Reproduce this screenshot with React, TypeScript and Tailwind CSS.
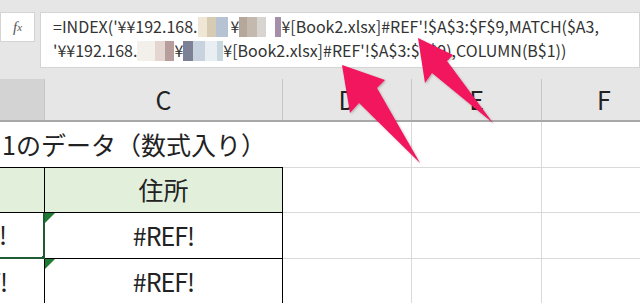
import React from 'react';

const font = { fontFamily: '"Noto Sans CJK JP", "Noto Sans", sans-serif' };

// pixelated mosaic block used for the blurred parts of the path
const Mosaic = ({ cells }: { cells: { w: number; c: string }[] }) => (
  <span className="inline-flex h-[20px] align-[-4px]">
    {cells.map((cell, i) => (
      <span key={i} className="inline-block h-full" style={{ width: cell.w, background: cell.c }} />
    ))}
  </span>
);

const Arrows = () => (
  <svg className="absolute left-0 top-0 pointer-events-none" width="640" height="303" viewBox="0 0 640 303">
    <defs>
      <filter id="sh" x="-20%" y="-20%" width="140%" height="140%">
        <feDropShadow dx="1" dy="1" stdDeviation="1" floodColor="#000" floodOpacity="0.25" />
      </filter>
    </defs>
    <polygon
      filter="url(#sh)"
      fill="#f2145e"
      points="342,65 385,80 377,88 420,163 359,103 350,113"
    />
    <polygon
      filter="url(#sh)"
      fill="#f2145e"
      points="418,38 453,55 447,61 493,123 432,73 425,83"
    />
  </svg>
);

const FormulaBar = () => (
  <div className="flex h-[79px] bg-[#e6e6e6] pt-[12px]">
    <div className="flex h-[30px] w-[35px] items-center justify-center border border-[#d4d4d4] bg-white text-[15px] italic text-[#555]" style={{ fontFamily: '"Liberation Serif", serif' }}>
      f<span className="text-[11px]">x</span>
    </div>
    <div
      className="ml-[5px] h-[56px] flex-1 border border-[#d4d4d4] bg-white pl-[12px] pt-[1px] text-[16px] leading-[24px] text-[#333] whitespace-nowrap overflow-hidden"
      style={font}
    >
      <div>
        =INDEX('¥¥192.168.
        <Mosaic cells={[{ w: 9, c: '#efe6d6' }, { w: 9, c: '#d8cbb4' }, { w: 12, c: '#b6c3d3' }, { w: 3, c: '#fff' }]} />
        ¥
        <Mosaic cells={[{ w: 8, c: '#b5a89a' }, { w: 10, c: '#c3b9ae' }, { w: 9, c: '#d8d4cf' }]} />
        <span className="inline-block w-[9px]" />
        <Mosaic cells={[{ w: 6, c: '#a58fa8' }]} />
        ¥[Book2.xlsx]#REF'!$A$3:$F$9,MATCH($A3,
      </div>
      <div>
        '¥¥192.168.
        <Mosaic cells={[{ w: 18, c: '#f3efea' }, { w: 10, c: '#e4d5d1' }, { w: 9, c: '#b79d9b' }]} />
        ¥
        <Mosaic cells={[{ w: 10, c: '#7d8196' }, { w: 12, c: '#c9d3df' }, { w: 12, c: '#e9eef3' }]} />
        <Mosaic cells={[{ w: 6, c: '#c7d8df' }]} />
        ¥[Book2.xlsx]#REF'!$A$3:$F$9),COLUMN(B$1))
      </div>
    </div>
  </div>
);

const HeaderRow = () => (
  <div className="flex h-[43px] border-b-2 border-[#a8a8a8] text-[25px] text-[#222]" style={font}>
    <div className="w-[45px] shrink-0 bg-[#d3d3d3] border-r border-[#c6c6c6]" />
    <div className="flex w-[238px] shrink-0 items-center justify-center bg-[#e6e6e6] border-r border-[#c6c6c6]">C</div>
    <div className="flex w-[129px] shrink-0 items-center justify-center bg-[#e6e6e6] border-r border-[#c6c6c6]">D</div>
    <div className="flex w-[130px] shrink-0 items-center justify-center bg-[#e6e6e6] border-r border-[#c6c6c6]">E</div>
    <div className="flex w-[124px] shrink-0 items-center justify-center bg-[#e6e6e6]">F</div>
  </div>
);

const EmptyCells = ({ h }: { h: string }) => (
  <>
    <div className={`${h} w-[129px] shrink-0 border-r border-b border-[#d9d9d9]`} />
    <div className={`${h} w-[130px] shrink-0 border-r border-b border-[#d9d9d9]`} />
    <div className={`${h} w-[124px] shrink-0 border-b border-[#d9d9d9]`} />
  </>
);

const Triangle = () => (
  <span className="absolute left-0 top-0 h-0 w-0 border-t-[10px] border-r-[10px] border-t-[#1f7a34] border-r-transparent" />
);

const RefRow = ({ selected }: { selected?: boolean }) => (
  <div className="flex" style={font}>
    <div
      className={`relative flex h-[46px] w-[45px] shrink-0 items-center justify-end overflow-hidden border-r border-b pr-[37px] text-[25px] tracking-[-1px] text-[#222] ${
        selected ? 'border-b-2 border-r-2 border-[#1f5b33]' : 'border-black'
      }`}
    >
      <span className="whitespace-nowrap">#REF!</span>
      {selected && <span className="absolute bottom-[-3px] right-[-3px] h-[5px] w-[5px] bg-[#1f5b33] border border-white" />}
    </div>
    <div className="relative flex h-[46px] w-[238px] shrink-0 items-center justify-center border-r border-b border-black text-[25px] tracking-[-1px] text-[#222]">
      <Triangle />
      #REF!
    </div>
    <EmptyCells h="h-[46px]" />
  </div>
);

export default function App() {
  return (
    <div className="relative h-[303px] w-[640px] overflow-hidden bg-white">
      <FormulaBar />
      <HeaderRow />
      {/* row 1: title */}
      <div className="flex" style={font}>
        <div className="flex h-[46px] w-[283px] shrink-0 items-center border-b border-black pl-[2px] text-[25px] text-[#222] whitespace-nowrap">
          1のデータ（数式入り）
        </div>
        <EmptyCells h="h-[46px]" />
      </div>
      {/* row 2: header */}
      <div className="flex" style={font}>
        <div className="h-[45px] w-[45px] shrink-0 bg-[#e2efda] border-r border-b border-black" />
        <div className="flex h-[45px] w-[238px] shrink-0 items-center justify-center bg-[#e2efda] border-r border-b border-black text-[25px] text-[#222]">
          住所
        </div>
        <EmptyCells h="h-[45px]" />
      </div>
      <RefRow selected />
      <RefRow />
      <Arrows />
    </div>
  );
}
